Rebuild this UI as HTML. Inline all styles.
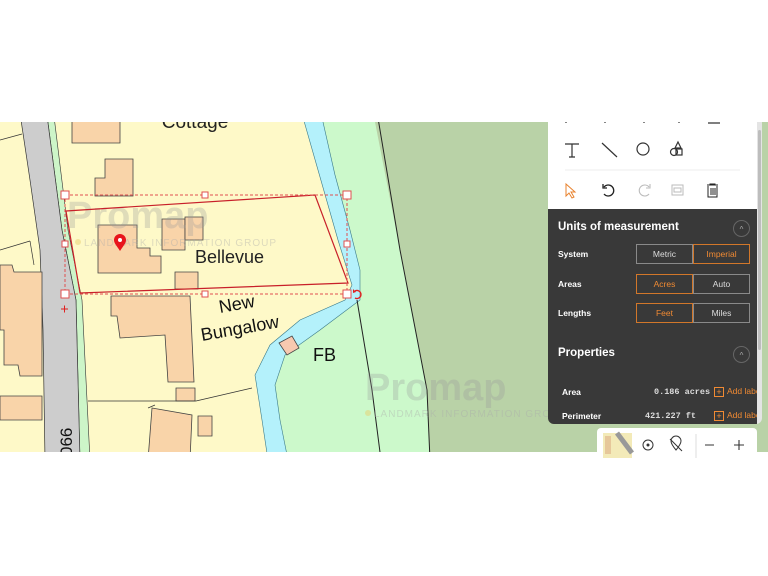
<!DOCTYPE html>
<html><head><meta charset="utf-8"><style>
html,body{margin:0;padding:0;width:768px;height:576px;background:#fff;overflow:hidden;font-family:"Liberation Sans",sans-serif}
#map{position:absolute;left:0;top:122px;width:768px;height:330px;overflow:hidden;background:#b9d2a7}
#map svg{position:absolute;left:0;top:-122px}
.panel{position:absolute;left:548px;top:122px;width:214px;height:302px;overflow:hidden;border-radius:0 0 6px 6px}
.white{position:absolute;left:0;top:0;width:209px;height:87px;background:#fff}
.dark{position:absolute;left:0;top:87px;width:209px;height:215px;background:#393939;color:#fff;font-size:9px}
.sb{position:absolute;left:209px;top:0;width:5px;height:302px;background:#e4e4e4}
.sb i{position:absolute;left:1px;top:8px;width:3px;height:220px;background:#bdbdbd;border-radius:2px}
.lbl{position:absolute;font-weight:bold;font-size:8.5px}
.h{position:absolute;font-weight:bold;font-size:11.5px}
.cc{position:absolute;width:15px;height:15px;border:1px solid #666;border-radius:50%;color:#aaa;font-size:8px;text-align:center;line-height:17px}
.btn{position:absolute;height:20px;width:56px;border:1px solid #8a8a8a;box-sizing:border-box;text-align:center;line-height:19px;font-size:8.5px;color:#ddd}
.on{border-color:#d2772a;color:#f08a33}
.v{position:absolute;font-size:8.5px;font-family:"Liberation Mono",monospace;font-weight:bold;color:#ddd}
.add{position:absolute;color:#f08a33;font-size:8.5px;white-space:nowrap}
.add b{display:inline-block;width:8px;height:8px;border:1px solid #f08a33;font-weight:normal;line-height:8px;text-align:center;font-size:9px;margin-right:3px;vertical-align:-1px}
.tb{position:absolute;left:597px;top:428px;width:160px;height:30px;background:#fff;border-radius:4px;overflow:hidden}
</style></head><body>
<div id="map">
<svg width="768" height="576" viewBox="0 0 768 576" xmlns="http://www.w3.org/2000/svg" font-family="Liberation Sans, sans-serif">
<polygon points="0,100 300,100 318,170 338,240 352,285 345,300 300,320 270,345 255,375 262,420 268,460 0,460" fill="#fef9c8"/>
<polygon points="318,100 375,100 375,122 400,250 427,390 430,460 288,460 280,420 275,385 285,355 320,330 360,300 360,270 350,230 335,175" fill="#ccf9cb"/>
<polygon points="298,100 318,100 335,175 350,230 360,270 360,300 320,330 285,355 275,385 280,420 288,460 268,460 262,420 255,375 270,345 300,320 345,300 352,285 338,240 318,170" fill="#b4f1fb" stroke="#3a7a8a" stroke-width=".6"/>
<polyline points="375,100 400,250 427,390 430,460" fill="none" stroke="#222" stroke-width="1"/>
<polyline points="357,300 372,390 381,460" fill="none" stroke="#222" stroke-width="1"/>
<polygon points="45,100 52,100 68,230 82,300 90,460 80,460 76,300 62,230" fill="#cdf5c8" stroke="#333" stroke-width=".6"/>
<polygon points="18,100 45,100 62,230 76,300 80,460 45,460 43,330 40,250 30,180" fill="#cdcdcd" stroke="#333" stroke-width=".7"/>
<g fill="#f9d4a9" stroke="#444" stroke-width=".8">
<polygon points="72,110 120,110 120,143 72,143"/>
<polygon points="105,159 133,159 133,196 95,196 95,178 105,178"/>
<polygon points="98,225 137,225 137,248 150,248 150,256 161,256 161,273 98,273"/>
<polygon points="162,219 185,219 185,250 162,250"/>
<polygon points="185,217 203,217 203,240 185,240"/>
<polygon points="175,272 198,272 198,289 175,289"/>
<polygon points="111,296 190,296 194,382 168,382 165,335 120,338 117,316 111,316"/>
<polygon points="176,388 195,388 195,401 176,401"/>
<polygon points="152,408 192,415 190,460 148,460"/>
<polygon points="198,416 212,416 212,436 198,436"/>
<polygon points="0,265 12,265 14,272 42,272 42,376 20,376 18,365 4,365 4,330 0,330"/>
<polygon points="0,396 42,396 42,420 0,420"/>
<polygon points="279,343 292,336 299,348 287,355" fill="#f7c9b0"/>
</g>
<g stroke="#333" stroke-width=".7" fill="none">
<line x1="0" y1="140" x2="22" y2="134"/><line x1="0" y1="250" x2="30" y2="241"/><line x1="30" y1="241" x2="34" y2="265"/>
<line x1="88" y1="401" x2="196" y2="401"/><line x1="196" y1="401" x2="252" y2="388"/>
<line x1="148" y1="408" x2="155" y2="405"/>
</g>
<text x="195" y="128" font-size="19" text-anchor="middle" fill="#222">Cottage</text>
<g fill="#9a9a9a" opacity=".3"><text x="67" y="228" font-size="38" font-weight="bold">Promap</text>
<text x="365" y="400" font-size="38" font-weight="bold">Promap</text></g>
<g fill="#aaa" opacity=".4" font-size="10" letter-spacing="1"><text x="84" y="246">LANDMARK INFORMATION GROUP</text><text x="374" y="417">LANDMARK INFORMATION GROUP</text></g>
<circle cx="78" cy="242" r="3" fill="#e8d070" opacity=".5"/><circle cx="368" cy="413" r="3" fill="#e8d070" opacity=".5"/>
<text x="195" y="263" font-size="18" fill="#222">Bellevue</text>
<text x="220" y="313" font-size="18" fill="#111" transform="rotate(-10 220 313)">New</text>
<text x="202" y="341" font-size="18" fill="#111" transform="rotate(-10 202 341)">Bungalow</text>
<text x="313" y="361" font-size="18" fill="#111">FB</text>
<text x="72" y="456" font-size="17" fill="#111" transform="rotate(-90 72 456)">066</text>
<polygon points="66,211 315,195 348,283 80,293" fill="none" stroke="#c8202a" stroke-width="1.2"/>
<rect x="65" y="195" width="282" height="99" fill="none" stroke="#e05050" stroke-width="1" stroke-dasharray="3,2"/>
<g fill="#fff" stroke="#e05050" stroke-width="1">
<rect x="61" y="191" width="8" height="8"/><rect x="202" y="192" width="6" height="6"/><rect x="343" y="191" width="8" height="8"/>
<rect x="62" y="241" width="6" height="6"/><rect x="344" y="241" width="6" height="6"/>
<rect x="61" y="290" width="8" height="8"/><rect x="202" y="291" width="6" height="6"/><rect x="343" y="290" width="8" height="8"/>
</g>
<path d="M61 309h7M64.5 305.5v7" stroke="#e02020" stroke-width="1"/>
<path d="M355 291a4 4 0 1 1 0 7" fill="none" stroke="#e02020" stroke-width="1.4"/><path d="M353 289l3 3-3 1z" fill="#e02020"/>
<path d="M120 251c-4-6-6-8-6-11a6 6 0 0 1 12 0c0 3-2 5-6 11z" fill="#e8141c"/><circle cx="120" cy="240" r="2" fill="#fff"/>
</svg>
</div>
<div class="panel">
<div class="white">
<svg width="209" height="87" viewBox="0 0 209 87">
<g fill="none" stroke="#333" stroke-width="1.2">
<path d="M18 0v1M57 0v1M96 0v1M131 0v1M160 1h12"/>
<path d="M17 22h14M24 22v13M21 35h6"/>
<path d="M54 21l15 14"/>
<circle cx="95" cy="27" r="6"/>
<circle cx="126" cy="30" r="3.5"/><rect x="128" y="27" width="6" height="6"/><path d="M130 20l3 6h-6z"/>
</g>
<line x1="17" y1="48" x2="192" y2="48" stroke="#eee"/>
<path d="M18 62v12l3-3 3 5 2-1-3-5h4z" fill="none" stroke="#e8822d" stroke-width="1"/>
<path d="M56 65a5.5 5.5 0 1 1 0 7M55 62v4h4" fill="none" stroke="#222" stroke-width="1.3"/>
<path d="M101 65a5.5 5.5 0 1 0 0 7M102 62v4h-4" fill="none" stroke="#bbb" stroke-width="1.1"/>
<rect x="124" y="63" width="11" height="10" fill="none" stroke="#bbb"/><rect x="126" y="66" width="7" height="4" fill="none" stroke="#bbb"/>
<path d="M159 63h11M162 63v-1h5v1M160 64v11h9v-11M163 66v7M165 66v7M167 66v7" fill="none" stroke="#222" stroke-width="1"/>
</svg>
</div>
<div class="dark">
<div class="h" style="left:10px;top:12px">Units of measurement</div>
<div class="cc" style="left:185px;top:11px">^</div>
<div class="lbl" style="left:10px;top:40px">System</div>
<div class="btn" style="left:88px;top:35px;width:57px">Metric</div>
<div class="btn on" style="left:145px;top:35px;width:57px">Imperial</div>
<div class="lbl" style="left:10px;top:70px">Areas</div>
<div class="btn on" style="left:88px;top:65px;width:57px">Acres</div>
<div class="btn" style="left:145px;top:65px;width:57px">Auto</div>
<div class="lbl" style="left:10px;top:99px">Lengths</div>
<div class="btn on" style="left:88px;top:94px;width:57px">Feet</div>
<div class="btn" style="left:145px;top:94px;width:57px">Miles</div>
<div class="h" style="left:10px;top:138px">Properties</div>
<div class="cc" style="left:185px;top:137px">^</div>
<div class="lbl" style="left:14px;top:178px">Area</div>
<div class="v" style="left:106px;top:178px">0.186 acres</div>
<div class="add" style="left:166px;top:177px"><b>+</b>Add label</div>
<div class="lbl" style="left:14px;top:202px">Perimeter</div>
<div class="v" style="left:97px;top:202px">421.227 ft</div>
<div class="add" style="left:166px;top:201px"><b>+</b>Add label</div>
</div>
<div class="sb"><i></i></div>
</div>
<div class="tb">
<svg width="160" height="30" viewBox="0 0 160 30">
<rect x="6" y="5" width="29" height="25" fill="#f3eab8"/><path d="M20 5l15 20" stroke="#999" stroke-width="5"/><path d="M8 8h6v18h-6z" fill="#e6c79a"/>
<circle cx="51" cy="17" r="5" fill="none" stroke="#333"/><circle cx="51" cy="17" r="1.5" fill="#333"/>
<path d="M74 13a5 5 0 0 1 10 0c0 3-5 9-5 9s-5-6-5-9zM73 11l12 12" fill="none" stroke="#333"/>
<line x1="99" y1="6" x2="99" y2="30" stroke="#ddd"/>
<path d="M108 17h9M137 17h10M142 12v10" stroke="#333" stroke-width="1.1"/>
</svg>
</div>
</body></html>
